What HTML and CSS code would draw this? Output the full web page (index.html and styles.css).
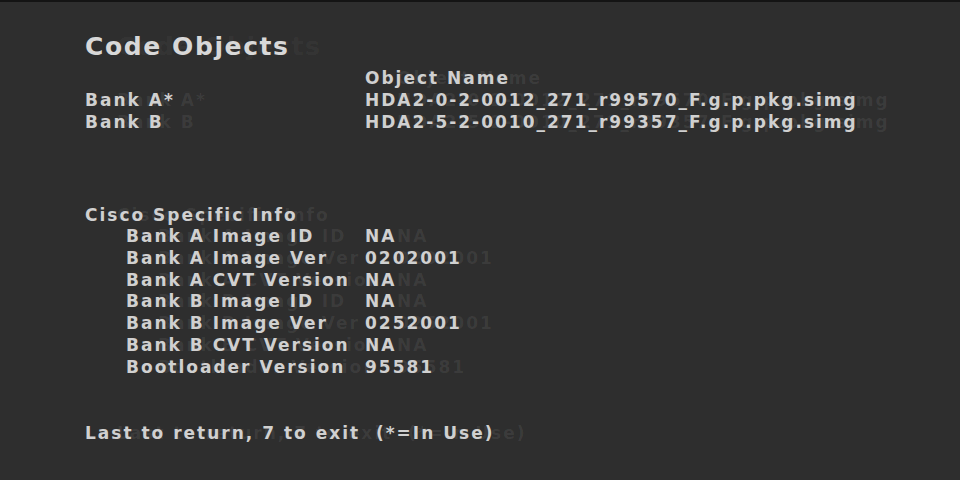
FILE: index.html
```html
<!DOCTYPE html>
<html>
<head>
<meta charset="utf-8">
<link rel="stylesheet" href="styles.css">
</head>
<body>
<div class="screen">
  <h1 class="title">Code Objects</h1>
  <div class="grid objects">
    <div></div><div>Object Name</div>
    <div>Bank A*</div><div>HDA2-0-2-0012_271_r99570_F.g.p.pkg.simg</div>
    <div>Bank B</div><div>HDA2-5-2-0010_271_r99357_F.g.p.pkg.simg</div>
  </div>
  <div class="section">Cisco Specific Info</div>
  <div class="grid info">
    <div class="ind">Bank A Image ID</div><div>NA</div>
    <div class="ind">Bank A Image Ver</div><div>0202001</div>
    <div class="ind">Bank A CVT Version</div><div>NA</div>
    <div class="ind">Bank B Image ID</div><div>NA</div>
    <div class="ind">Bank B Image Ver</div><div>0252001</div>
    <div class="ind">Bank B CVT Version</div><div>NA</div>
    <div class="ind">Bootloader Version</div><div>95581</div>
  </div>
  <div class="footer">Last to return, 7 to exit&nbsp; (*=In Use)</div>
</div>
</body>
</html>
```
FILE: styles.css
```css
html, body {
  margin: 0;
  padding: 0;
  background: #2e2e2e;
}
body {
  width: 960px;
  height: 480px;
  overflow: hidden;
  border-top: 2px solid #141414;
  box-sizing: border-box;
}
.screen {
  padding: 28px 0 0 85px;
  font-family: "DejaVu Sans", sans-serif;
  font-weight: 700;
  color: #d0d0d0;
  font-size: 17px;
  letter-spacing: 2px;
  text-shadow: 32px 0 0 rgba(255, 255, 255, 0.07);
}
.title {
  margin: 0;
  font-size: 25px;
  font-weight: 700;
  line-height: 34px;
  color: #d8d8d8;
  letter-spacing: 1.6px;
  text-shadow: 32px 0 0 rgba(255, 255, 255, 0.05);
}
.grid {
  display: grid;
  grid-template-columns: 280px auto;
  line-height: 22px;
}
.objects {
  margin-top: 3px;
}
.section {
  margin-top: 71px;
  line-height: 22px;
}
.info {
  line-height: 21.8px;
}
.ind {
  padding-left: 41px;
}
.footer {
  margin-top: 43px;
  line-height: 22px;
}
```
